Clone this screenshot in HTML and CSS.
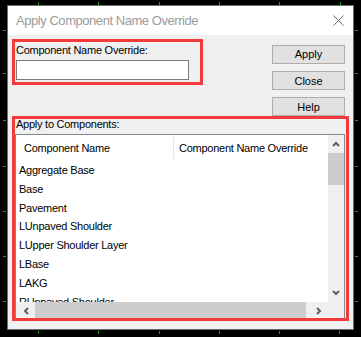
FILE: index.html
```html
<!DOCTYPE html>
<html lang="en">
<head>
    <meta charset="UTF-8">
    <title>Apply Component Name Override</title>
    <link rel="stylesheet" href="styles.css">
</head>
<body>
<div class="ticks">
    <span class="tick tick-v" style="left:38px;top:2px"></span>
    <span class="tick tick-v" style="left:98px;top:2px"></span>
    <span class="tick tick-v" style="left:159px;top:2px"></span>
    <span class="tick tick-v" style="left:219px;top:2px"></span>
    <span class="tick tick-v" style="left:279px;top:2px"></span>
    <span class="tick tick-v" style="left:340px;top:2px"></span>
    <span class="tick tick-v" style="left:38px;top:331px"></span>
    <span class="tick tick-v" style="left:98px;top:331px"></span>
    <span class="tick tick-v" style="left:159px;top:331px"></span>
    <span class="tick tick-v" style="left:219px;top:331px"></span>
    <span class="tick tick-v" style="left:279px;top:331px"></span>
    <span class="tick tick-v" style="left:339px;top:331px"></span>
    <span class="tick tick-h" style="left:3px;top:30px"></span>
    <span class="tick tick-h" style="left:3px;top:73px"></span>
    <span class="tick tick-h" style="left:3px;top:120px"></span>
    <span class="tick tick-h" style="left:3px;top:166px"></span>
    <span class="tick tick-h" style="left:3px;top:211px"></span>
    <span class="tick tick-h" style="left:3px;top:256px"></span>
    <span class="tick tick-h" style="left:3px;top:301px"></span>
    <span class="tick tick-h" style="left:355px;top:30px"></span>
    <span class="tick tick-h" style="left:355px;top:73px"></span>
    <span class="tick tick-h" style="left:355px;top:120px"></span>
    <span class="tick tick-h" style="left:355px;top:166px"></span>
    <span class="tick tick-h" style="left:355px;top:211px"></span>
    <span class="tick tick-h" style="left:355px;top:256px"></span>
    <span class="tick tick-h" style="left:355px;top:301px"></span>
</div>

<div class="dialog">
    <div class="titlebar">
        <span class="title">Apply Component Name Override</span>
        <svg class="close" width="11" height="11" viewBox="0 0 11 11">
            <path d="M0.5 0.5 L10.5 10.5 M10.5 0.5 L0.5 10.5" stroke="#6b6b6b" stroke-width="1" fill="none"/>
        </svg>
    </div>
    <div class="content">
        <div class="top">
            <div class="mark name-box">
                <label class="label" for="NameOverride">Component Name Override:</label>
                <input class="field" id="NameOverride" type="text">
            </div>
            <div class="buttons">
                <button class="btn">Apply</button>
                <button class="btn">Close</button>
                <button class="btn">Help</button>
            </div>
        </div>
        <div class="mark group">
            <div class="label group-label">Apply to Components:</div>
            <div class="listview">
                <div class="lv-main">
                    <div class="lv-body">
                        <div class="lv-header">
                            <div class="col col-name">Component Name</div>
                            <div class="col col-over">Component Name Override</div>
                        </div>
                        <div class="row">Aggregate Base</div>
                        <div class="row">Base</div>
                        <div class="row">Pavement</div>
                        <div class="row">LUnpaved Shoulder</div>
                        <div class="row">LUpper Shoulder Layer</div>
                        <div class="row">LBase</div>
                        <div class="row">LAKG</div>
                        <div class="row">RUnpaved Shoulder</div>
                    </div>
                    <div class="vscroll">
                        <div class="sb-btn sb-up">
                            <svg width="8" height="6" viewBox="0 0 8 6"><polyline points="1,5 4,2 7,5" fill="none" stroke="#606060" stroke-width="2"/></svg>
                        </div>
                        <div class="vthumb"></div>
                        <div class="sb-fill"></div>
                        <div class="sb-btn sb-down">
                            <svg width="8" height="6" viewBox="0 0 8 6"><polyline points="1,1 4,4 7,1" fill="none" stroke="#606060" stroke-width="2"/></svg>
                        </div>
                    </div>
                </div>
                <div class="hscroll">
                    <div class="sb-btn sb-left">
                        <svg width="6" height="8" viewBox="0 0 6 8"><polyline points="5,1 2,4 5,7" fill="none" stroke="#606060" stroke-width="2"/></svg>
                    </div>
                    <div class="hthumb"></div>
                    <div class="sb-btn sb-right">
                        <svg width="6" height="8" viewBox="0 0 6 8"><polyline points="1,1 4,4 1,7" fill="none" stroke="#606060" stroke-width="2"/></svg>
                    </div>
                    <div class="corner"></div>
                </div>
            </div>
        </div>
    </div>
</div>
</body>
</html>
```

FILE: styles.css
```css
html {
    background-color: #000;
}

body {
    margin: 0;
    padding: 5px 0 0 7px;
    width: 361px;
    height: 337px;
    box-sizing: border-box;
    position: relative;
    overflow: hidden;
    font-family: "Liberation Sans", Arial, sans-serif;
    font-size: 11px;
    letter-spacing: -0.25px;
    color: #000;
}

.ticks {
    position: absolute;
    inset: 0;
}

.tick {
    position: absolute;
    background-color: #129a12;
}

.tick-v {
    width: 1px;
    height: 3px;
}

.tick-h {
    width: 3px;
    height: 1px;
}

.dialog {
    position: relative;
    width: 347px;
    height: 325px;
    border: 1px solid #6e6e6e;
    box-sizing: border-box;
    display: flex;
    flex-direction: column;
    background-color: #f0f0f0;
}

.titlebar {
    height: 29px;
    background-color: #fff;
    display: flex;
    align-items: center;
    padding: 0 9px 0 8px;
}

.title {
    flex: 1;
    font-size: 13px;
    letter-spacing: -0.45px;
    color: #9b9b9b;
}

.content {
    flex: 1;
}

.top {
    display: flex;
    height: 81px;
}

.mark {
    border: 3px solid #f23c3c;
    box-sizing: border-box;
}

.name-box {
    margin: 4px 0 0 4px;
    width: 191px;
    height: 46px;
    padding: 1px 0 0 1px;
}

.label {
    display: block;
    line-height: 14px;
}

.field {
    display: block;
    margin: 3px 0 0 0;
    width: 173px;
    height: 20px;
    border: 1px solid #7a7a7a;
    box-sizing: border-box;
    background-color: #fff;
    padding: 0;
}

.buttons {
    margin: 10px 8px 0 auto;
    display: flex;
    flex-direction: column;
    gap: 7.5px;
    width: 73px;
}

.btn {
    height: 20px;
    padding: 0;
    background-color: #e1e1e1;
    border: 1px solid #adadad;
    font: inherit;
    color: #000;
}

.group {
    position: relative;
    z-index: 1;
    margin-left: 4px;
    width: 337px;
    height: 205px;
    overflow: hidden;
}

.group-label {
    padding-left: 1px;
    line-height: 13px;
    margin-top: -1px;
}

.listview {
    margin-top: 3px;
    width: 330px;
    height: 185px;
    border: 1px solid #828790;
    box-sizing: border-box;
    background-color: #fff;
}

.lv-main {
    display: flex;
    height: 167px;
}

.lv-body {
    flex: 1;
    overflow: hidden;
}

.lv-header {
    height: 26px;
    display: flex;
    align-items: center;
}

.col {
    line-height: 22px;
    white-space: nowrap;
}

.col-name {
    width: 158px;
    padding-left: 8px;
    box-sizing: border-box;
    border-right: 1px solid #e5e5e5;
}

.col-over {
    padding-left: 5px;
}

.row {
    height: 18.8px;
    line-height: 18.8px;
    padding-left: 3px;
    white-space: nowrap;
}

.vscroll {
    width: 16px;
    background-color: #f0f0f0;
    display: flex;
    flex-direction: column;
}

.sb-btn {
    display: flex;
    align-items: center;
    justify-content: center;
}

.sb-btn svg {
    display: block;
}

.sb-up,
.sb-down {
    height: 18px;
}

.vthumb {
    height: 32px;
    background-color: #cdcdcd;
}

.sb-fill {
    flex: 1;
}

.hscroll {
    height: 17px;
    display: flex;
    background-color: #f0f0f0;
}

.sb-left {
    width: 19px;
}

.hthumb {
    width: 271px;
    background-color: #cdcdcd;
}

.sb-right {
    width: 22px;
    justify-content: flex-end;
    padding-right: 6px;
    box-sizing: border-box;
}

.corner {
    width: 16px;
}
```
